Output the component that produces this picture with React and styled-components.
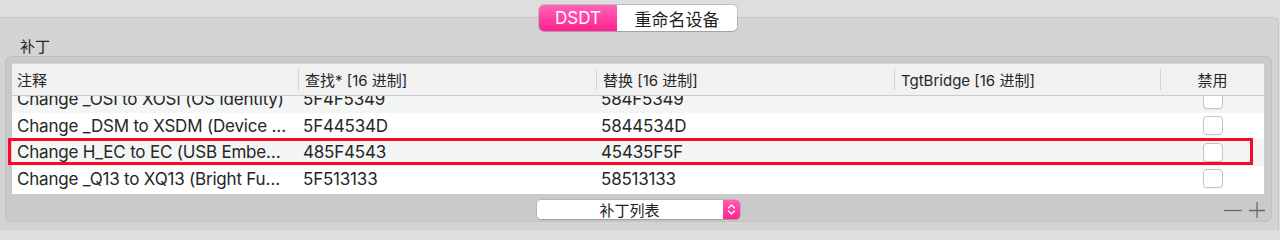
import React, { useLayoutEffect, useRef } from "react";
import styled, { createGlobalStyle } from "styled-components";

const Global = createGlobalStyle`
  html, body { margin: 0; padding: 0; background: #dedede; }
  body { font-family: Inter, "Noto Sans CJK SC", sans-serif; color: #262626; }
  #root { width: 1280px; height: 230px; overflow: hidden; }
`;

const Window = styled.div`
  width: 1280px;
  height: 230px;
  background: #dedede;
  padding-top: 5px;
  box-sizing: border-box;
`;

const SegmentBar = styled.div`
  display: flex;
  justify-content: center;
  position: relative;
  z-index: 2;
  padding-right: 4px;
`;

const Segmented = styled.div`
  display: flex;
  height: 26px;
  border-radius: 5px;
  background: #fff;
  box-shadow: 0 0 0 1px rgba(0, 0, 0, 0.14), 0 1px 1px rgba(0, 0, 0, 0.12);
  overflow: hidden;
`;

const Segment = styled.div`
  display: flex;
  align-items: center;
  justify-content: center;
  width: ${(p) => p.$w}px;
  font-size: 17px;
  font-family: Inter, "Noto Sans CJK SC", sans-serif;
  color: ${(p) => (p.$active ? "#fff" : "#1e1e1e")};
  background: ${(p) =>
    p.$active ? "linear-gradient(#ff64b8, #ff1f8e)" : "#fff"};
`;

const TabBox = styled.div`
  margin-top: -14px;
  margin-right: 1px;
  height: 220px;
  background: #d4d4d4;
  border-top: 1px solid #c8c8c8;
  border-right: 1px solid #c8c8c8;
  border-radius: 0 6px 0 0;
  padding: 20px 6px 0 5px;
  box-sizing: border-box;
`;

const GroupLabel = styled.div`
  font-size: 15px;
  line-height: 18px;
  margin-left: 15px;
  color: #262626;
`;

const GroupBox = styled.div`
  position: relative;
  height: 166px;
  box-sizing: border-box;
  background: #cacaca;
  border: 1px solid #c0c0c0;
  border-radius: 6px;
  padding: 6px 7px 3px 6px;
  display: flex;
  flex-direction: column;
`;

const COLS = "286px 298px 298px 266px 105px";

const Table = styled.div`
  background: #fff;
  display: flex;
  flex-direction: column;
`;

const HeaderRow = styled.div`
  display: grid;
  grid-template-columns: ${COLS};
  height: 31px;
  background: #f1f1f1;
  border-top: 1px solid #d6d6d6;
  border-bottom: 1px solid #cbcbcb;
`;

const HeaderCell = styled.div`
  display: flex;
  align-items: center;
  justify-content: ${(p) => (p.$center ? "center" : "flex-start")};
  padding-left: ${(p) => (p.$center ? 0 : p.$first ? 5 : 7)}px;
  font-size: 15px;
  color: #262626;
  white-space: nowrap;
  position: relative;
  &::before {
    content: "";
    display: ${(p) => (p.$first ? "none" : "block")};
    position: absolute;
    left: 0;
    top: 5px;
    bottom: 5px;
    width: 1px;
    background: #d2d2d2;
  }
`;

const Body = styled.div`
  height: 98px;
  overflow: hidden;
`;

const Row = styled.div`
  display: grid;
  grid-template-columns: ${COLS};
  height: 26.5px;
  background: ${(p) => (p.$alt ? "#f4f5f5" : "#fff")};
`;

const Cell = styled.div`
  display: flex;
  align-items: center;
  justify-content: ${(p) => (p.$center ? "center" : "flex-start")};
  padding-left: ${(p) => (p.$center ? 0 : 5)}px;
  padding-right: ${(p) => (p.$center ? 0 : 10)}px;
  font-size: 17px;
  letter-spacing: -0.2px;
  color: #262626;
  overflow: hidden;
  min-width: 0;
`;

const CellText = styled.span`
  overflow: hidden;
  white-space: nowrap;
  text-overflow: ellipsis;
`;

const Check = styled.div`
  width: 18px;
  height: 17px;
  border: 1px solid #c4c4c4;
  border-radius: 4px;
  background: #fff;
  box-shadow: 0 0.5px 1px rgba(0, 0, 0, 0.06);
`;

const Highlight = styled.div`
  position: absolute;
  left: 2px;
  top: 81px;
  width: 1239px;
  height: 21px;
  border: 3px solid #ff0826;
  pointer-events: none;
`;

const Footer = styled.div`
  display: grid;
  grid-template-columns: 1fr auto 1fr;
  align-items: center;
  margin-top: 6px;
  height: 19px;
`;

const Popup = styled.div`
  grid-column: 2;
  width: 203px;
  height: 19px;
  display: flex;
  border-radius: 4px;
  background: #fff;
  box-shadow: 0 0 0 0.5px rgba(0, 0, 0, 0.18), 0 1px 1px rgba(0, 0, 0, 0.15);
  overflow: hidden;
`;

const PopupLabel = styled.div`
  flex: 1;
  display: flex;
  align-items: center;
  justify-content: center;
  font-size: 15px;
  color: #1e1e1e;
`;

const Stepper = styled.div`
  width: 17px;
  background: linear-gradient(#ff5eb3, #ff2290);
  display: flex;
  align-items: center;
  justify-content: center;
`;

const PlusMinus = styled.div`
  grid-column: 3;
  justify-self: end;
  display: flex;
  gap: 7px;
  align-items: center;
  margin-right: -1px;
`;

const rows = [
  ["Change _OSI to XOSI (OS Identity)", "5F4F5349", "584F5349", true],
  ["Change _DSM to XSDM (Device Specific Method)", "5F44534D", "5844534D", false],
  ["Change H_EC to EC (USB Embedded Controller)", "485F4543", "45435F5F", true],
  ["Change _Q13 to XQ13 (Bright Function Key)", "5F513133", "58513133", false],
];

export default function App() {
  const bodyRef = useRef(null);
  useLayoutEffect(() => {
    if (bodyRef.current) bodyRef.current.scrollTop = 10;
  }, []);
  return (
    <Window>
      <Global />
      <SegmentBar>
        <Segmented>
          <Segment $active $w={78}>DSDT</Segment>
          <Segment $w={120}>重命名设备</Segment>
        </Segmented>
      </SegmentBar>
      <TabBox>
        <GroupLabel>补丁</GroupLabel>
        <GroupBox>
          <Table>
            <HeaderRow>
              <HeaderCell $first>注释</HeaderCell>
              <HeaderCell>查找* [16 进制]</HeaderCell>
              <HeaderCell>替换 [16 进制]</HeaderCell>
              <HeaderCell>TgtBridge [16 进制]</HeaderCell>
              <HeaderCell $center>禁用</HeaderCell>
            </HeaderRow>
            <Body ref={bodyRef}>
              {rows.map(([c, f, r, alt]) => (
                <Row key={c} $alt={alt}>
                  <Cell>
                    <CellText>{c}</CellText>
                  </Cell>
                  <Cell>
                    <CellText>{f}</CellText>
                  </Cell>
                  <Cell>
                    <CellText>{r}</CellText>
                  </Cell>
                  <Cell />
                  <Cell $center>
                    <Check />
                  </Cell>
                </Row>
              ))}
              <div style={{ height: 2 }} />
            </Body>
          </Table>
          <Highlight />
          <Footer>
            <Popup>
              <PopupLabel>补丁列表</PopupLabel>
              <Stepper>
                <svg width="9" height="13" viewBox="0 0 9 13">
                  <path d="M1.5 5 L4.5 2 L7.5 5" fill="none" stroke="#fff" strokeWidth="1.2" strokeLinecap="round" strokeLinejoin="round" />
                  <path d="M1.5 8 L4.5 11 L7.5 8" fill="none" stroke="#fff" strokeWidth="1.2" strokeLinecap="round" strokeLinejoin="round" />
                </svg>
              </Stepper>
            </Popup>
            <PlusMinus>
              <svg width="18" height="16" viewBox="0 0 18 16">
                <path d="M0 8.5 H18" stroke="#6a6a6a" strokeWidth="1.3" />
              </svg>
              <svg width="16" height="16" viewBox="0 0 16 16">
                <path d="M0 8.5 H16 M8 0 V16" stroke="#6a6a6a" strokeWidth="1.3" />
              </svg>
            </PlusMinus>
          </Footer>
        </GroupBox>
      </TabBox>
    </Window>
  );
}
